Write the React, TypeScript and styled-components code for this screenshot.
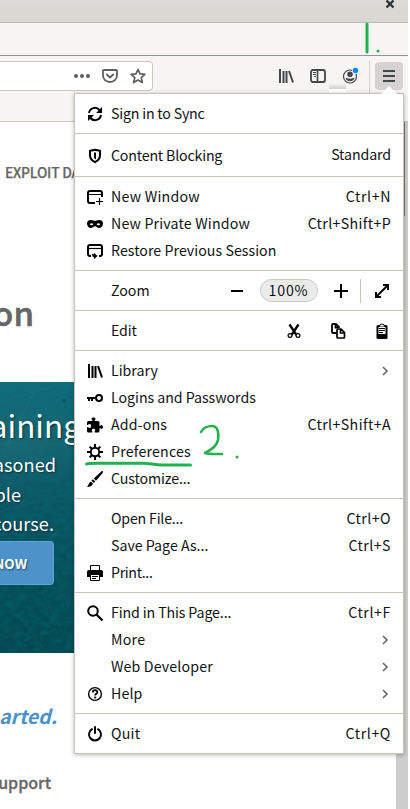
import React from "react";
import styled, { createGlobalStyle } from "styled-components";

const GlobalStyle = createGlobalStyle`
  * { box-sizing: border-box; }
  body { margin: 0; background: #fff; overflow: hidden; }
`;

const uiFont = `"Noto Sans CJK SC", "Noto Sans", sans-serif`;

const Screen = styled.div`
  position: relative;
  width: 410px;
  height: 809px;
  overflow: hidden;
  background: #fff;
  font-family: ${uiFont};
  color: #101314;
`;

const TitleBar = styled.header`
  display: flex;
  justify-content: flex-end;
  width: 408px;
  height: 23px;
  padding-right: 13px;
  background: linear-gradient(#dedad7, #dad6d2);
  border-bottom: 1px solid #bfb8b1;
`;

const TabStrip = styled.div`
  width: 408px;
  height: 33px;
  background: #f6f5f4;
  border-bottom: 1px solid #929595;
`;

const Toolbar = styled.nav`
  display: flex;
  align-items: flex-start;
  justify-content: space-between;
  width: 408px;
  height: 66px;
  background: #f6f5f4;
  border-bottom: 1px solid #cdc8c3;
`;

const UrlField = styled.div`
  display: flex;
  align-items: center;
  justify-content: flex-end;
  gap: 12px;
  width: 153px;
  height: 30px;
  margin-top: 5px;
  padding-right: 6px;
  background: #fff;
  border: 1px solid #cdc7c2;
  border-left: 0;
  border-radius: 0 4px 4px 0;
  color: #5e5e5e;
`;

const Tools = styled.div`
  display: flex;
  align-items: center;
  height: 40px;
  padding-right: 5px;
  color: #414849;
`;

const ToolIcon = styled.span`
  display: flex;
  width: 16px;
  margin-right: 16px;
`;

const ToolDivider = styled.span`
  width: 1px;
  height: 34px;
  margin: 3px 5px 0 -5px;
  background: #d6d2ce;
`;

const MenuButton = styled.span`
  display: flex;
  align-items: center;
  justify-content: center;
  width: 28px;
  height: 28px;
  border-radius: 4px;
  background: #d5d3d1;
`;

const TabEdge = styled.span`
  position: absolute;
  left: 329px;
  top: 84px;
  width: 17px;
  height: 9px;
  background: linear-gradient(#f3f2f1 0, #d5d3d0 4px, #d5d3d0 5px, #fff 5px);
`;

const Body = styled.div`
  display: flex;
  width: 408px;
  height: 687px;
`;

const Page = styled.main`
  width: 396px;
  overflow: hidden;
  white-space: nowrap;
`;

const Scrollbar = styled.div`
  width: 12px;
  padding-left: 5px;
  background: #cdcdcd;
`;

const Thumb = styled.div`
  width: 4px;
  height: 94px;
  background: #7e7d7c;
`;

const SiteNav = styled.div`
  height: 168px;
  padding: 40px 0 0 5px;
  font-size: 13.8px;
  line-height: 20px;
  font-weight: 500;
  color: #666;
  letter-spacing: -0.2px;
  -webkit-text-stroke: 0.25px #666;
`;

const Heading = styled.h1`
  display: flex;
  align-items: flex-start;
  height: 92px;
  width: 35px;
  margin: 0;
  padding-right: 1px;
  justify-content: flex-end;
  font-size: 33px;
  line-height: 45px;
  font-weight: 500;
  color: #666;
  -webkit-text-stroke: 0.6px #666;
`;

const Hero = styled.section`
  position: relative;
  width: 396px;
  height: 271px;
  background:
    radial-gradient(ellipse at 12px 60px, rgba(42, 116, 126, 0.45), transparent 90px),
    linear-gradient(#126b79, #0e5b68 30%, #07515d 60%, #034850);
  color: #fff;
  text-shadow: 1px 1px 2px rgba(0, 0, 0, 0.5);
`;

const Scratches = styled.svg`
  position: absolute;
  inset: 0;
`;

const HeroContent = styled.div`
  position: relative;
  display: flex;
  flex-direction: column;
`;

const HeroTitle = styled.div`
  display: flex;
  justify-content: flex-end;
  width: 81px;
  height: 67px;
  padding-top: 18px;
  font-size: 31.5px;
  line-height: 48px;
`;

const HeroLine = styled.div<{ $end: number }>`
  display: flex;
  justify-content: flex-end;
  width: ${(p) => p.$end}px;
  height: 29.5px;
  font-size: 18.2px;
  line-height: 30px;
`;

const HeroButton = styled.div`
  display: flex;
  align-items: center;
  justify-content: flex-end;
  width: 54px;
  height: 44px;
  margin-top: 3px;
  padding-right: 26px;
  border: 1px solid #5da4d8;
  border-left: 0;
  border-radius: 0 4px 4px 0;
  background: #4d93c9;
  font-size: 13.5px;
  font-weight: 700;
`;

const Footer = styled.div`
  display: flex;
  flex-direction: column;
`;

const Started = styled.em`
  display: flex;
  justify-content: flex-end;
  width: 57px;
  margin-top: 47px;
  font-size: 19.5px;
  line-height: 32px;
  font-weight: 700;
  color: #4b92c8;
`;

const Support = styled.div`
  display: flex;
  justify-content: flex-end;
  width: 51px;
  margin-top: 38px;
  font-size: 16px;
  line-height: 24px;
  font-weight: 500;
  color: #666;
  -webkit-text-stroke: 0.3px #666;
`;

const Menu = styled.div`
  position: absolute;
  left: 74px;
  top: 93px;
  width: 330px;
  border: 1px solid #c9c3bd;
  background: #fff;
  box-shadow: 0 1px 4px rgba(0, 0, 0, 0.28);
`;

const Arrow = styled.svg`
  position: absolute;
  right: 4px;
  top: -9px;
`;

const Section = styled.div<{ $tall?: boolean }>`
  padding: ${(p) => (p.$tall ? "8px 0 7px" : "6px 0")};
  & + & { border-top: 1px solid #cbc4bd; }
`;

const Row = styled.div`
  display: flex;
  align-items: center;
  height: 27px;
  padding: 0 12px;
  font-size: 14.2px;
  line-height: 27px;
  white-space: nowrap;
`;

const IconSlot = styled.span`
  display: flex;
  width: 24px;
  flex: none;
  color: #000;
`;

const Label = styled.span<{ $ls?: number }>`
  flex: 1;
  letter-spacing: ${(p) => p.$ls ?? 0}px;
`;

const Shortcut = styled.span<{ $ls: number; $up?: boolean }>`
  letter-spacing: ${(p) => p.$ls}px;
  padding-bottom: ${(p) => (p.$up ? 2 : 0)}px;
`;

const Chevron = styled.span`
  display: flex;
  width: 14px;
  color: #686868;
`;

const Controls = styled.div<{ $gap: number }>`
  display: flex;
  align-items: center;
  gap: ${(p) => p.$gap}px;
  margin-right: 1px;
  color: #000;
`;

const ZoomLevel = styled.span`
  width: 58px;
  height: 23px;
  border: 1px solid #cdc7c2;
  border-radius: 12px;
  background: #ebebeb;
  color: #101314;
  line-height: 20px;
  letter-spacing: 0.8px;
  text-indent: -1px;
  text-align: center;
`;

const ControlDivider = styled.span`
  width: 1px;
  height: 24px;
  margin: 0 -2px 0 -4px;
  background: #cbc4bd;
`;

const Ink = styled.svg`
  position: absolute;
  left: 0;
  top: 0;
`;

const art: Record<string, React.ReactNode> = {
  sync: <><path d="M2 7a6 6 0 0 1 10.5-3M14 9a6 6 0 0 1-10.5 3" fill="none" stroke="currentColor" strokeWidth="2" /><path d="M15 1v6H9zM1 15V9h6z" fill="currentColor" /></>,
  shield: <><path d="M8 1.8c2 .7 3.500.8 5 .9v4.300c0 3.500-2 5.800-5 7.200-3-1.400-5-3.700-5-7.200V2.700C4.500 2.600 6 2.500 8 1.800z" fill="none" stroke="currentColor" strokeWidth="2" strokeLinejoin="round" /><path d="M7 4.500h2v7L7 10z" fill="currentColor" /></>,
  window: <><path d="M15 8V4a2 2 0 0 0-2-2H3a2 2 0 0 0-2 2v8a2 2 0 0 0 2 2h5" fill="none" stroke="currentColor" strokeWidth="2" /><path d="M1 5.500h14M12.500 9v7M9 12.500h7" stroke="currentColor" strokeWidth="1.200" /></>,
  mask: <path fill="currentColor" fillRule="evenodd" d="M4.500 4C6 4 7 5 8 5s2-1 3.500-1C14.500 4 16 5 16 7.500S14.300 12 12 12c-1.800 0-2.800-1.700-4-1.700S5.800 12 4 12c-2.300 0-4-2-4-4.500S1.500 4 4.500 4zM2.700 8.200c1.300 1.400 2.600 1.400 3.700 0-1-1.200-2.500-1.300-3.700 0zm6.900 0c1.100 1.400 2.400 1.400 3.700 0-1.200-1.300-2.700-1.200-3.700 0z" />,
  restore: <><path d="M4 13H3a2 2 0 0 1-2-2V4a2 2 0 0 1 2-2h10a2 2 0 0 1 2 2v7a2 2 0 0 1-2 2h-1" fill="none" stroke="currentColor" strokeWidth="2" /><path d="M1 5.500h14" stroke="currentColor" strokeWidth="1.200" /><path d="M6 11v1.200c0 .5.300.8.800.8H8" fill="none" stroke="currentColor" strokeWidth="1.800" /><path d="M7 9.800 10.500 13 7 16.200z" fill="currentColor" /></>,
  library: <path d="M2 1v14M5.500 3v12M8.500 3v12M11 3l4 11.500" stroke="currentColor" strokeWidth="2" fill="none" />,
  key: <><circle cx="12" cy="8" r="3" fill="none" stroke="currentColor" strokeWidth="2" /><path d="M9 8H0M2 8v3M5 8v3" stroke="currentColor" strokeWidth="2" /></>,
  addon: <path fill="currentColor" d="M14.500 8c-.8 0-1 1-1.500 1s-.5-.5-.5-1V5.500A1.500 1.500 0 0 0 11 4H8.500C8 4 7.500 4 7.500 3.500S8.500 2.800 8.500 2c0-1-.9-1.500-2-1.500s-2 .5-2 1.500c0 .8 1 1 1 1.500S5 4 4.500 4h-3A1.500 1.500 0 0 0 0 5.500V7c0 .5 0 1 .5 1s1-1 2-1 1.700.8 1.700 2-.7 2-1.700 2-1.500-1-2-1-.5.500-.5 1v3A1.500 1.500 0 0 0 1.500 15.500H5c.5 0 .7-.3.500-.8-.3-.5-.7-.8-.7-1.400 0-1 .7-1.500 1.700-1.500s1.700.5 1.700 1.500c0 .6-.4.900-.7 1.400-.2.500 0 .8.500.8h3A1.500 1.500 0 0 0 12.500 14v-2c0-.5 0-1 .5-1s.7 1 1.500 1S16 11 16 10s-.7-2-1.500-2z" />,
  gear: <><circle cx="8" cy="8" r="4.200" fill="none" stroke="currentColor" strokeWidth="1.900" /><path d="M8 0v3.500M8 12.500V16M0 8h3.500M12.500 8H16M2.600 2.600l2.200 2.200M11.200 11.200l2.200 2.200M2.600 13.400l2.200-2.200M11.200 4.800l2.200-2.200" stroke="currentColor" strokeWidth="2" /></>,
  brush: <path fill="currentColor" d="M15.700.3c.5.500.4 1-.1 1.700L9 9.700 6.800 7.500 14.200.5c.6-.5 1-.6 1.500-.2zM6 8.300 8.200 10.500 6.900 12 4.500 9.700zM4 10.500 6 12.700c-1 2.300-3 3.300-6 3.300 1.600-2 1.800-4.500 4-5.500z" />,
  print: <><path d="M3.500 6V.5h9V6" fill="#fff" stroke="currentColor" strokeWidth="1" /><path d="M2 5h12a2 2 0 0 1 2 2v5H0V7a2 2 0 0 1 2-2z" fill="currentColor" /><path d="M3.500 9.500h9v6h-9z" fill="#fff" stroke="currentColor" /><path d="M5 11.500h6M5 13.500h4" stroke="currentColor" /></>,
  search: <><circle cx="6" cy="6" r="4.800" fill="none" stroke="currentColor" strokeWidth="2" /><path d="m9.500 9.500 6 6" stroke="currentColor" strokeWidth="2.200" /></>,
  help: <><circle cx="8" cy="8" r="6.400" fill="none" stroke="currentColor" strokeWidth="1.400" /><path d="M5.800 6.400c0-3 4.600-2.900 4.600-.2 0 1.600-2.200 1.600-2.200 3.200" fill="none" stroke="currentColor" strokeWidth="1.800" /><circle cx="8.200" cy="11.500" r="1.100" fill="currentColor" /></>,
  power: <path d="M5 3.200a6 6 0 1 0 6 0M8 1v6" fill="none" stroke="currentColor" strokeWidth="2" strokeLinecap="round" />,
  minus: <path d="M2 8h12" stroke="currentColor" strokeWidth="2" />,
  plus: <path d="M1 8h14M8 1v14" stroke="currentColor" strokeWidth="2" />,
  expand: <><path d="m3 13 10-10" stroke="currentColor" strokeWidth="2" /><path d="M9 2h5v5M2 9v5h5" fill="none" stroke="currentColor" strokeWidth="2" /></>,
  cut: <><path d="M3.500 1.500 10.500 12M12.500 1.500 5.500 12" stroke="currentColor" strokeWidth="2.300" /><circle cx="4" cy="12.500" r="1.900" fill="#fff" stroke="currentColor" strokeWidth="1.200" /><circle cx="12" cy="12.500" r="1.900" fill="#fff" stroke="currentColor" strokeWidth="1.200" /></>,
  copy: <><path d="M7 10H3a1 1 0 0 1-1-1V2a1 1 0 0 1 1-1h3l3 3v1M5.500 1v3.500H8" fill="none" stroke="currentColor" strokeWidth="1.800" /><path d="M8 6h3l3.500 3.500V14a1 1 0 0 1-1 1H8a1 1 0 0 1-1-1V7a1 1 0 0 1 1-1zM10.500 6v4h4" fill="#fff" stroke="currentColor" strokeWidth="1.700" /></>,
  paste: <><rect x="2.500" y="2" width="11" height="14" rx="1.500" fill="currentColor" /><path d="M5.500 3.500a2.500 2.500 0 0 1 5 0" fill="#fff" stroke="currentColor" /><path d="M4.500 4h7v7h-7z" fill="#fff" /><path d="M5 5.500h6M5 7.500h6M5 9.500h4" stroke="currentColor" /></>,
  chevron: <path d="m6 4 4 4-4 4" fill="none" stroke="currentColor" strokeWidth="1.600" />,
  dots: <g fill="currentColor"><circle cx="2" cy="8" r="2" /><circle cx="8" cy="8" r="2" /><circle cx="14" cy="8" r="2" /></g>,
  pocket: <><path d="M2 2h12a1 1 0 0 1 1 1v4.500a7 6.500 0 0 1-14 0V3a1 1 0 0 1 1-1z" fill="none" stroke="currentColor" strokeWidth="1.800" /><path d="m4.800 6.500 3.200 3 3.200-3" fill="none" stroke="currentColor" strokeWidth="1.800" strokeLinecap="round" /></>,
  star: <path d="m8 1.500 2 4.400 4.900.5-3.700 3.200 1.200 4.900L8 12l-4.400 2.500 1.200-4.900L1.100 6.400 6 5.900z" fill="none" stroke="currentColor" strokeWidth="1.700" strokeLinejoin="round" />,
  sidebar: <><rect x="1" y="2" width="14" height="12" rx="2" fill="none" stroke="currentColor" strokeWidth="1.800" /><path d="M7.500 2v12" stroke="currentColor" strokeWidth="1.600" /><path d="M3 4.500h3M3 6.500h3M4 8.500h2" stroke="currentColor" /></>,
  account: <><circle cx="8" cy="8.500" r="6.500" fill="none" stroke="currentColor" strokeWidth="1.200" /><circle cx="8" cy="6.300" r="2.800" fill="currentColor" /><path d="M3.500 9.500c1.500 1.500 7.500 1.500 9 0-.2 5-8.800 5-9 0z" fill="currentColor" /><circle cx="13.500" cy="2.500" r="3.400" fill="#f6f5f4" /><circle cx="13.500" cy="2.500" r="2.700" fill="#0a84ff" /></>,
  burger: <path d="M2 3h12M2 8h12M2 13h12" stroke="currentColor" strokeWidth="2" />,
  close: <path d="m4.500 2.500 7 7m0-7-7 7" stroke="#2e3436" strokeWidth="2.400" />,
};

const Icon = ({ name }: { name: string }) => (
  <svg width="16" height="16" viewBox="0 0 16 16" overflow="visible">{art[name]}</svg>
);

type ItemProps = { icon?: string; label: string; keys?: string; sub?: boolean; up?: boolean; ls?: number; kls?: number };

const Item = ({ icon, label, keys, sub, up, ls, kls = 0.6 }: ItemProps) => (
  <Row>
    <IconSlot>{icon && <Icon name={icon} />}</IconSlot>
    <Label $ls={ls}>{label}</Label>
    {keys && <Shortcut $up={up} $ls={kls}>{keys}</Shortcut>}
    {sub && <Chevron><Icon name="chevron" /></Chevron>}
  </Row>
);

export default function App() {
  return (
    <Screen>
      <GlobalStyle />
      <TitleBar><svg width="10" height="12" viewBox="3 2 10 12">{art.close}</svg></TitleBar>
      <TabStrip />
      <Toolbar>
        <UrlField>
          <Icon name="dots" /><Icon name="pocket" /><Icon name="star" />
        </UrlField>
        <Tools>
          <ToolIcon><Icon name="library" /></ToolIcon>
          <ToolIcon><Icon name="sidebar" /></ToolIcon>
          <ToolIcon><Icon name="account" /></ToolIcon>
          <ToolDivider />
          <MenuButton><Icon name="burger" /></MenuButton>
        </Tools>
      </Toolbar>
      <TabEdge />
      <Body>
        <Page>
          <SiteNav>EXPLOIT DATABASE</SiteNav>
          <Heading>on</Heading>
          <Hero>
            <Scratches width="396" height="271" fill="none" stroke="#8bc4c8" strokeOpacity=".05">
              <filter id="grain" x="0" y="0" width="100%" height="100%">
                <feTurbulence type="fractalNoise" baseFrequency=".12 .16" numOctaves="4" seed="7" />
                <feColorMatrix values="0 0 0 0 0  0 0 0 0 .18  0 0 0 0 .22  .6 0 0 0 -.2" />
              </filter>
              <rect width="396" height="271" stroke="none" filter="url(#grain)" />
              <path d="M0 20 60 2M4 70l30-60M10 110l60-82M0 130l72-20M5 218l40 50M0 235l25 35M32 190l30 60M50 180l20 50" />
              <g fill="#00333c" fillOpacity=".35" stroke="none"><circle cx="64" cy="19" r="2" /><circle cx="41" cy="207" r="2.500" /><circle cx="22" cy="204" r="2" /></g>
            </Scratches>
            <HeroContent>
              <HeroTitle>aining</HeroTitle>
              <HeroLine $end={56}>asoned</HeroLine>
              <HeroLine $end={21}>ble</HeroLine>
              <HeroLine $end={54}>course.</HeroLine>
              <HeroButton>NOW</HeroButton>
            </HeroContent>
          </Hero>
          <Footer>
            <Started>arted.</Started>
            <Support>upport</Support>
          </Footer>
        </Page>
        <Scrollbar><Thumb /></Scrollbar>
      </Body>
      <Menu>
        <Arrow width="20" height="10" viewBox="0 0 20 10">
          <path d="M1 10 10 1l9 9z" fill="#fff" />
        </Arrow>
        <Section><Item icon="sync" label="Sign in to Sync" ls={-0.2} /></Section>
        <Section $tall><Item icon="shield" label="Content Blocking" ls={-0.18} keys="Standard" kls={-0.1} up /></Section>
        <Section>
          <Item icon="window" label="New Window" ls={0.25} keys="Ctrl+N" />
          <Item icon="mask" label="New Private Window" ls={0.17} keys="Ctrl+Shift+P" kls={0.35} />
          <Item icon="restore" label="Restore Previous Session" ls={0.04} />
        </Section>
        <Section>
          <Row>
            <IconSlot />
            <Label>Zoom</Label>
            <Controls $gap={15}>
              <Icon name="minus" />
              <ZoomLevel>100%</ZoomLevel>
              <Icon name="plus" />
              <ControlDivider />
              <Icon name="expand" />
            </Controls>
          </Row>
        </Section>
        <Section>
          <Row>
            <IconSlot />
            <Label $ls={-0.1}>Edit</Label>
            <Controls $gap={28}>
              <Icon name="cut" /><Icon name="copy" /><Icon name="paste" />
            </Controls>
          </Row>
        </Section>
        <Section>
          <Item icon="library" label="Library" sub />
          <Item icon="key" label="Logins and Passwords" ls={-0.03} />
          <Item icon="addon" label="Add-ons" ls={0.15} keys="Ctrl+Shift+A" kls={0.4} />
          <Item icon="gear" label="Preferences" ls={0.2} />
          <Item icon="brush" label="Customize..." ls={-0.12} />
        </Section>
        <Section>
          <Item label="Open File..." ls={-0.2} keys="Ctrl+O" kls={0.45} />
          <Item label="Save Page As..." keys="Ctrl+S" kls={0.45} />
          <Item icon="print" label="Print..." ls={-0.35} />
        </Section>
        <Section>
          <Item icon="search" label="Find in This Page..." ls={-0.12} keys="Ctrl+F" />
          <Item label="More" ls={0.25} sub />
          <Item label="Web Developer" ls={0.15} sub />
          <Item icon="help" label="Help" ls={0.1} sub />
        </Section>
        <Section><Item icon="power" label="Quit" ls={0.2} keys="Ctrl+Q" /></Section>
      </Menu>
      <Ink width="410" height="809" fill="none" stroke="#22b14c" strokeWidth="3" strokeLinecap="round" strokeLinejoin="round">
        <path d="M367 24v28" />
        <path d="M378 51h.01M237 457h.01" />
        <path d="M86.500 464c2-1 6-.8 16-.8h40c8 0 11 1.800 20 1.800h28" />
        <path d="M201 432c2-4 7-6 11-6 6 0 7 7 6 14-1 6-7 10-13 13 5 1.500 10 1 17 1" strokeWidth="2.600" />
      </Ink>
    </Screen>
  );
}
